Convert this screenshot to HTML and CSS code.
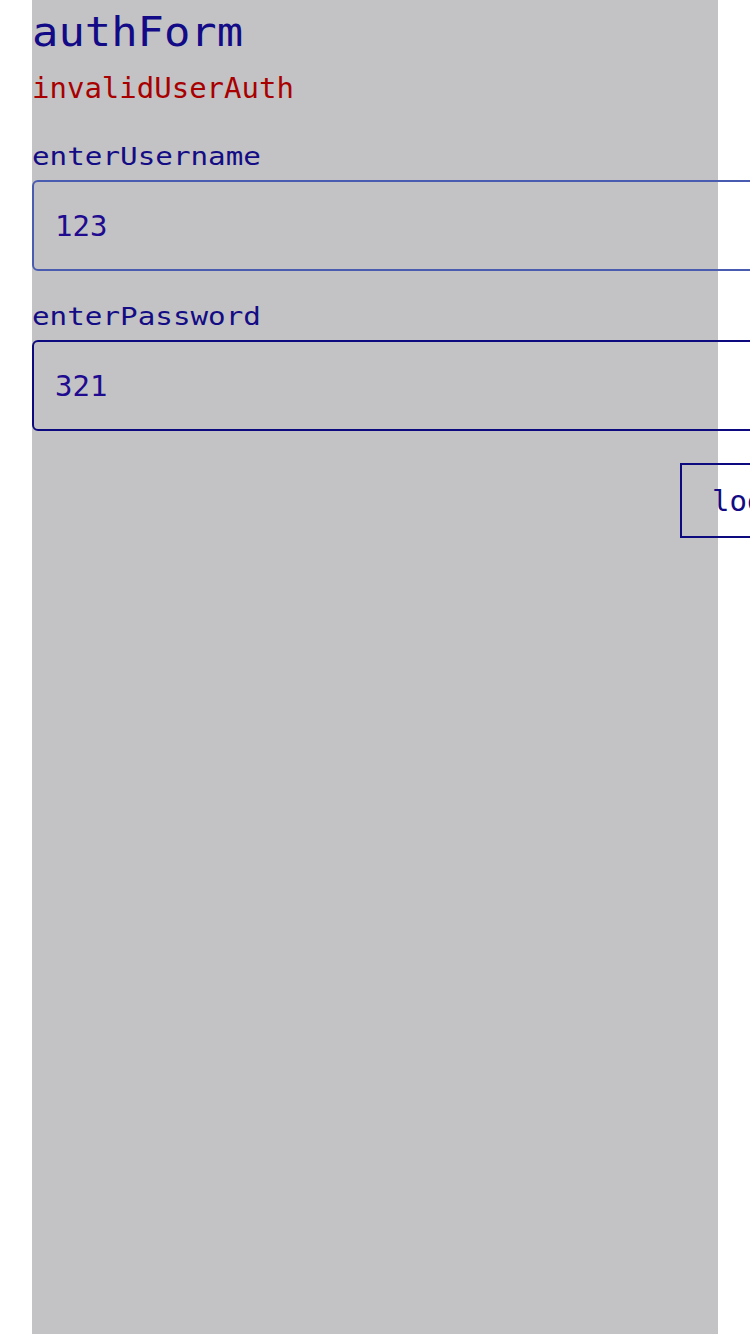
FILE: index.html
```html
<!DOCTYPE html>
<html lang="en">
<head>
<meta charset="utf-8">
<title>authForm</title>
<link rel="stylesheet" href="styles.css">
</head>
<body>
<main class="panel">
  <h1 class="title">authForm</h1>
  <p class="error">invalidUserAuth</p>
  <form class="form">
    <label class="label" for="username">enterUsername</label>
    <input class="field field-focus" id="username" type="text" value="123">
    <label class="label label-gap" for="password">enterPassword</label>
    <input class="field" id="password" type="text" value="321">
    <div class="actions">
      <button class="btn" type="button">login</button>
    </div>
  </form>
</main>
</body>
</html>
```

FILE: styles.css
```css
html, body {
  margin: 0;
  padding: 0;
  overflow: hidden;
  background: #ffffff;
}

body {
  font-family: "DejaVu Sans Mono", monospace;
  color: #100a84;
}

.panel {
  margin-left: 32px;
  width: 686px;
  min-height: 1334px;
  background: #c3c3c5;
  padding-top: 9px;
  box-sizing: border-box;
}

.title {
  margin: 0;
  font-size: 40px;
  line-height: 47px;
  font-weight: normal;
  color: #120a86;
  transform: scaleX(1.096);
  transform-origin: left center;
}

.error {
  margin: 15px 0 0;
  font-size: 29px;
  line-height: 34px;
  color: #a80000;
}

.form {
  display: flex;
  flex-direction: column;
  width: 800px;
  margin-top: 37px;
}

.label {
  display: block;
  align-self: flex-start;
  font-size: 25px;
  line-height: 30px;
  color: #140c84;
  transform: scaleX(1.17);
  transform-origin: left center;
}

.label-gap {
  margin-top: 31px;
}

.field {
  margin-top: 8px;
  box-sizing: border-box;
  width: 100%;
  height: 91px;
  padding: 0 21px;
  border: 2px solid #0d0a80;
  border-radius: 6px;
  background: transparent;
  font-family: "DejaVu Sans Mono", monospace;
  font-size: 29px;
  color: #200a90;
  outline: none;
}

.field-focus {
  border-color: #4a5cb0;
}

.actions {
  display: flex;
  justify-content: flex-end;
  margin-top: 32px;
}

.btn {
  box-sizing: border-box;
  width: 152px;
  height: 75px;
  padding: 0 30px;
  border: 2px solid #0d0a80;
  border-radius: 0;
  background: transparent;
  font-family: "DejaVu Sans Mono", monospace;
  font-size: 29px;
  color: #100a84;
  text-align: left;
}
```
